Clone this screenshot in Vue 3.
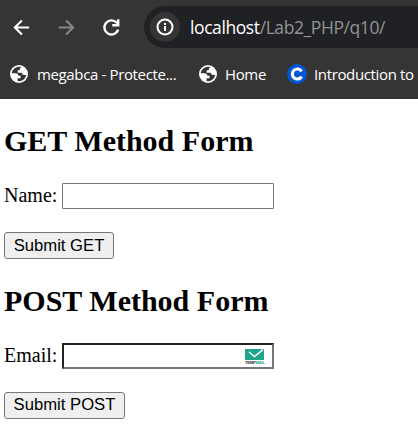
<script setup>
import { ref } from 'vue'

const bookmarks = [
  { label: 'megabca - Protecte...', icon: 'globe', cls: 'mega' },
  { label: 'Home', icon: 'globe', cls: 'home' },
  { label: 'Introduction to', icon: 'c', cls: 'intro' }
]
const name = ref('')
const email = ref('')
</script>

<template>
  <div class="window">
    <header class="chrome">
      <div class="toolbar">
        <svg class="nav back" viewBox="0 0 24 24"><path d="M20 12H5.2M12.4 4.7L5.1 12l7.3 7.3" /></svg>
        <svg class="nav forward" viewBox="0 0 24 24"><path d="M4 12h14.8M11.6 4.7l7.3 7.3-7.3 7.3" /></svg>
        <svg class="nav reload" viewBox="0 0 24 24"><path d="M19 14.2A7.4 7.4 0 1 1 17.3 6.8L19 8.5" /><path d="M19 3.4V9.7H12.8" /></svg>
        <div class="omnibox">
          <span class="info">
            <svg viewBox="0 0 18 18"><circle cx="9" cy="9" r="7.5" /><path d="M9 8v5M9 5v2" /></svg>
          </span>
          <span class="url"><b>localhost</b>/Lab2_PHP/q10/</span>
        </div>
      </div>
      <nav class="bookmarks">
        <a v-for="b in bookmarks" :key="b.label" :class="['bookmark', b.cls]">
          <svg v-if="b.icon === 'globe'" class="globe" viewBox="0 0 18 18">
            <circle cx="9" cy="9" r="9" fill="#fff" />
            <path fill="#353535" d="M9.6 1.7A7.4 7.4 0 0 0 1.7 8.3H5.6C7.5 8.3 8.2 9.3 8.4 10.8H10.6V13.2H7.6V16.1C12 16.6 15.7 13.6 16.2 9.9H14.1C12.8 9.9 11.9 9 11.7 7.8H7.7V5.3H8.8C9.8 5.3 9.9 4.6 9.9 3.7C9.9 3.1 10.4 2.8 11.2 2.6V2Z" />
          </svg>
          <svg v-else class="course" viewBox="0 0 20 20">
            <circle cx="10" cy="10" r="10" fill="#0056d2" />
            <path d="M14.6 7.4A5 5 0 1 0 14.6 12.6" fill="none" stroke="#fff" stroke-width="3.1" />
          </svg>
          <span class="title">{{ b.label }}</span>
        </a>
      </nav>
    </header>

    <main class="page">
      <form @submit.prevent>
        <h2>GET Method Form</h2>
        <div class="field">
          <label for="name">Name:</label>
          <span class="box"><input id="name" v-model="name" type="text" /></span>
        </div>
        <button>Submit GET</button>
      </form>
      <form @submit.prevent>
        <h2>POST Method Form</h2>
        <div class="field">
          <label for="email">Email:</label>
          <span class="box">
            <input id="email" v-model="email" class="inset" type="email" />
            <span class="mail">
              <svg viewBox="0 0 19 11"><path fill="#20a58a" d="M0 0H19V11H0z" /><path d="M4 3l5.5 4.6L18 0.6" fill="none" stroke="#fff" stroke-width="1.4" /></svg>
              <span class="brand">TEMP<i>MAIL</i></span>
            </span>
          </span>
        </div>
        <button class="post">Submit POST</button>
      </form>
    </main>
  </div>
</template>

<style>
body { margin: 0; background: #fff; overflow: hidden; }
</style>

<style scoped>
.window { width: 418px; height: 438px; overflow: hidden; background: #fff; }
.chrome { height: 99px; background: #353535; color: #fff; font-family: "Open Sans", "Noto Sans", sans-serif; overflow: hidden; }
.toolbar { display: flex; align-items: center; height: 42px; padding-top: 6px; }
.nav { width: 23px; height: 23px; flex: none; fill: none; stroke: #fff; stroke-width: 2.2; }
.back { margin-left: 10px; }
.forward { margin-left: 22px; stroke: #868686; }
.reload { margin-left: 22px; stroke-width: 2.5; }
.omnibox { box-sizing: border-box; display: flex; align-items: center; flex: 1; height: 42px; margin-left: 21px; padding-left: 6px; border-radius: 21px 0 0 21px; background: #202124; }
.info { display: flex; align-items: center; justify-content: center; width: 30px; height: 30px; border-radius: 50%; background: #353535; }
.info svg { width: 18px; height: 18px; fill: none; stroke: #fff; stroke-width: 2; }
.url { margin-left: 10px; color: #929395; font-size: 17.5px; letter-spacing: -0.41px; line-height: 24px; white-space: nowrap; }
.url b { color: #fff; font-weight: 400; }
.bookmarks { display: flex; align-items: center; height: 52px; white-space: nowrap; }
.bookmark { display: flex; align-items: center; flex: none; font-size: 15px; letter-spacing: -0.36px; line-height: 20px; }
.bookmark svg { flex: none; }
.title { padding-bottom: 1px; }
.globe { width: 18px; height: 18px; }
.course { width: 20px; height: 20px; }
.mega { width: 179px; margin-left: 10px; gap: 9px; }
.home { width: 88px; margin-left: 10px; gap: 8px; }
.intro { gap: 7px; }
.page { padding: 25px 4px 0; color: #000; font-family: "Liberation Serif", "Times New Roman", serif; font-size: 20px; }
form { height: 160px; }
h2 { margin: 0; font-size: 30px; line-height: 34px; font-weight: 700; }
.field { display: flex; align-items: center; height: 26px; margin-top: 25px; }
label { width: 58px; padding-bottom: 2px; line-height: 24px; }
.box { position: relative; display: flex; width: 212px; height: 26px; }
input { box-sizing: border-box; width: 212px; height: 26px; margin: 0; padding: 1px 2px; border: 1px solid #767676; border-radius: 1px; outline: none; background: #fff; font: 16.67px "Liberation Sans", Arial, sans-serif; }
.inset { border: 2px solid; border-color: #222 #767676 #767676 #222; border-radius: 0; }
.mail { position: absolute; top: 6px; right: 10px; width: 19px; height: 16px; }
.mail svg { display: block; width: 19px; height: 11px; }
.brand { display: block; color: #102c3c; font: 700 4px/5px "Liberation Sans", Arial, sans-serif; white-space: nowrap; letter-spacing: -0.15px; }
.brand i { color: #20a58a; font-style: normal; }
button { box-sizing: border-box; display: block; width: 110px; height: 27px; margin: 23px 0 0; padding: 0; border: 1px solid #767676; border-radius: 3px; background: #efefef; color: #000; font: 16.67px/25px "Liberation Sans", Arial, sans-serif; white-space: nowrap; }
.post { width: 121px; line-height: 23px; padding-bottom: 2px; }
</style>
